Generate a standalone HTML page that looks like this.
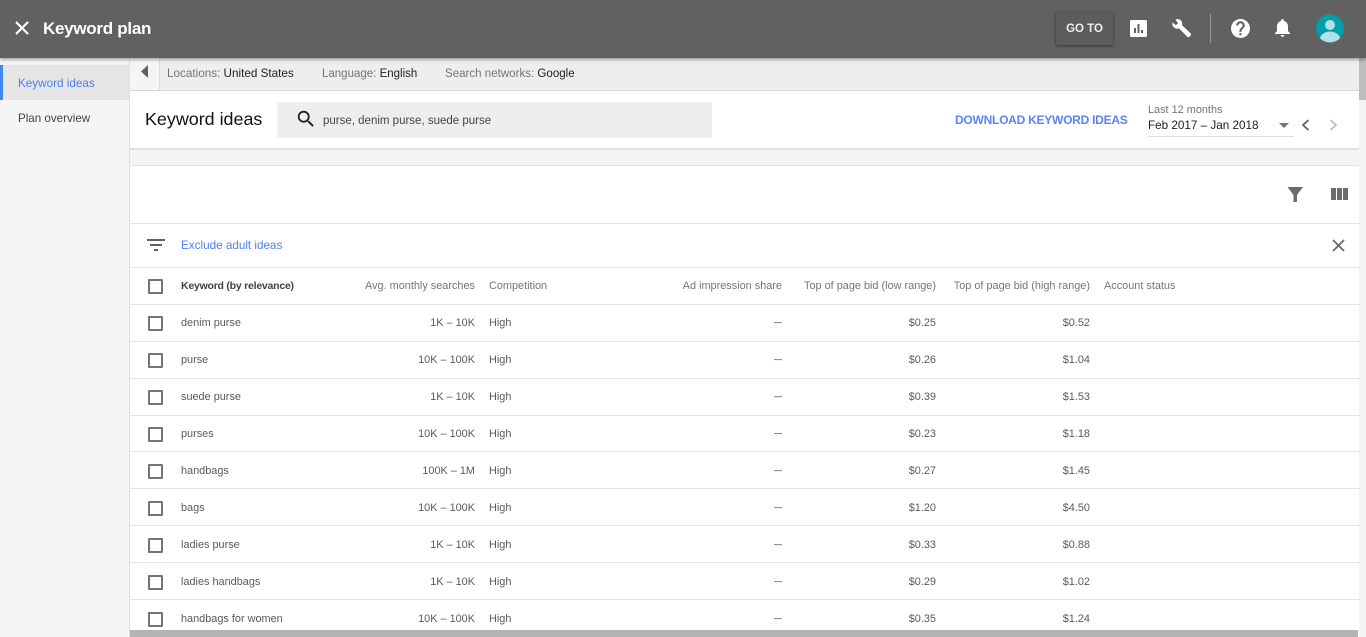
<!DOCTYPE html>
<html><head><meta charset="utf-8"><style>
html,body{margin:0;padding:0;width:1366px;height:637px;overflow:hidden;background:#f5f5f5;font-family:"Liberation Sans",sans-serif}
.a{position:absolute;white-space:nowrap}
.l{position:absolute;left:130px;width:1229px;height:1px;background:#e3e3e3}
.t{position:absolute;white-space:nowrap;font-size:10.9px;color:#5a5a5a;line-height:14px;margin-top:1px}
.r{text-align:right;width:200px}
.h{color:#757575}
.d{font-size:8px;color:#222}
.cb{position:absolute;left:148px;width:11px;height:11px;border:2px solid #757575;border-radius:1px}
svg{position:absolute;display:block}
</style></head><body>
<div class="a" style="left:130px;top:58px;width:1229px;height:579px;background:#fff"></div>
<div class="a" style="left:129px;top:58px;width:1px;height:579px;background:#e0e0e0"></div>
<!-- sidebar -->
<div class="a" style="left:0;top:65px;width:129px;height:35px;background:#e5e5e5"></div>
<div class="a" style="left:0;top:65px;width:3px;height:35px;background:#4285f4"></div>
<div class="a" style="left:18px;top:77px;font-size:11.7px;line-height:14px;color:#4d80f0">Keyword ideas</div>
<div class="a" style="left:18px;top:112px;font-size:11.6px;line-height:14px;color:#424242">Plan overview</div>
<!-- filter bar -->
<div class="a" style="left:130px;top:58px;width:1229px;height:32px;background:#eee;border-bottom:1px solid #d6d6d6"></div>
<div class="a" style="left:130px;top:58px;width:29px;height:32px;background:#f5f5f5;border-right:1px solid #ddd;border-bottom:1px solid #d6d6d6"></div>
<svg style="left:141px;top:65px" width="8" height="13"><path d="M7 0V13L0 6.5Z" fill="#616161"/></svg>
<div class="a" style="left:167px;top:67px;font-size:11.7px;line-height:14px;color:#757575">Locations: <span style="color:#212121">United States</span></div>
<div class="a" style="left:322px;top:67px;font-size:11.5px;line-height:14px;color:#757575">Language: <span style="color:#212121">English</span></div>
<div class="a" style="left:445px;top:67px;font-size:11.55px;line-height:14px;color:#757575">Search networks: <span style="color:#212121">Google</span></div>
<!-- title row -->
<div class="a" style="left:145px;top:108px;font-size:17.900px;line-height:22px;color:#111">Keyword ideas</div>
<div class="a" style="left:277px;top:102px;width:435px;height:36px;background:#eee"></div>
<svg style="left:295px;top:108px" width="22" height="22" viewBox="0 0 24 24"><path fill="#212121" d="M15.5 14h-.79l-.28-.27A6.47 6.47 0 0 0 16 9.5 6.5 6.5 0 1 0 9.5 16c1.61 0 3.09-.59 4.23-1.57l.27.28v.79l5 4.99L20.49 19l-4.99-5zm-6 0C7.01 14 5 11.99 5 9.5S7.01 5 9.5 5 14 7.01 14 9.5 11.99 14 9.5 14z"/></svg>
<div class="a" style="left:323px;top:114px;font-size:11.5px;line-height:14px;color:#444">purse, denim purse, suede purse</div>
<div class="a" style="left:955px;top:113px;font-size:12px;letter-spacing:-.25px;line-height:15px;font-weight:bold;color:#5a85ee">DOWNLOAD KEYWORD IDEAS</div>
<div class="a" style="left:1148px;top:104px;font-size:10.9px;line-height:13px;color:#757575">Last 12 months</div>
<div class="a" style="left:1148px;top:118px;font-size:11.7px;line-height:15px;color:#212121">Feb 2017 – Jan 2018</div>
<div class="a" style="left:1148px;top:136px;width:146px;height:1px;background:#ddd"></div>
<svg style="left:1279px;top:123px" width="10" height="5"><path d="M0 0H10L5 5Z" fill="#757575"/></svg>
<svg style="left:1301px;top:119px" width="9" height="12"><path d="M7.5 1L2 6l5.500 5" fill="none" stroke="#616161" stroke-width="1.800"/></svg>
<svg style="left:1329px;top:119px" width="9" height="12"><path d="M1.500 1L7 6l-5.500 5" fill="none" stroke="#bdbdbd" stroke-width="1.800"/></svg>
<!-- grey gap -->
<div class="a" style="left:130px;top:148px;width:1229px;height:17px;background:#f5f5f5;border-top:2px solid #e0e0e0;box-sizing:border-box"></div>
<div class="l" style="top:165px"></div>
<!-- toolbar -->
<svg style="left:1287px;top:186px" width="17" height="17"><path d="M0.500 1H16L10 9V16H6.500V9Z" fill="#6b6b6b"/></svg>
<svg style="left:1331px;top:188px" width="17" height="12"><path d="M0 0H5V12H0ZM6 0H11V12H6ZM12 0H17V12H12Z" fill="#6b6b6b"/></svg>
<div class="l" style="top:223px"></div>
<svg style="left:147px;top:239px" width="18" height="12"><path d="M0 0H18V2H0ZM3 5H15V7H3ZM7 10H11V12H7Z" fill="#616161"/></svg>
<div class="a" style="left:181px;top:239px;font-size:11.700px;line-height:14px;color:#4d80f0">Exclude adult ideas</div>
<svg style="left:1332px;top:239px" width="13" height="13"><path d="M1 1L12 12M12 1L1 12" stroke="#666" stroke-width="1.800" fill="none"/></svg>
<div class="l" style="top:267px"></div>
<!-- table head -->
<div class="cb" style="top:279px"></div>
<div class="t" style="left:181px;top:278px;font-size:10.5px;letter-spacing:-.23px;font-weight:bold;color:#424242">Keyword (by relevance)</div>
<div class="t r h" style="left:275px;top:278px">Avg. monthly searches</div>
<div class="t h" style="left:489px;top:278px">Competition</div>
<div class="t r h" style="left:582px;top:278px">Ad impression share</div>
<div class="t r h" style="left:736px;top:278px">Top of page bid (low range)</div>
<div class="t r h" style="left:890px;top:278px">Top of page bid (high range)</div>
<div class="t h" style="left:1104px;top:278px">Account status</div>
<div class="l" style="top:304px"></div>
<!-- rows -->
<div class="cb" style="top:316px"></div><div class="t" style="left:181px;top:315px">denim purse</div><div class="t r" style="left:275px;top:315px">1K – 10K</div><div class="t" style="left:489px;top:315px">High</div><div class="t r d" style="left:582px;top:315px">—</div><div class="t r" style="left:736px;top:315px">$0.25</div><div class="t r" style="left:890px;top:315px">$0.52</div><div class="l" style="top:341px"></div>
<div class="cb" style="top:353px"></div><div class="t" style="left:181px;top:352px">purse</div><div class="t r" style="left:275px;top:352px">10K – 100K</div><div class="t" style="left:489px;top:352px">High</div><div class="t r d" style="left:582px;top:352px">—</div><div class="t r" style="left:736px;top:352px">$0.26</div><div class="t r" style="left:890px;top:352px">$1.04</div><div class="l" style="top:378px"></div>
<div class="cb" style="top:390px"></div><div class="t" style="left:181px;top:389px">suede purse</div><div class="t r" style="left:275px;top:389px">1K – 10K</div><div class="t" style="left:489px;top:389px">High</div><div class="t r d" style="left:582px;top:389px">—</div><div class="t r" style="left:736px;top:389px">$0.39</div><div class="t r" style="left:890px;top:389px">$1.53</div><div class="l" style="top:415px"></div>
<div class="cb" style="top:427px"></div><div class="t" style="left:181px;top:426px">purses</div><div class="t r" style="left:275px;top:426px">10K – 100K</div><div class="t" style="left:489px;top:426px">High</div><div class="t r d" style="left:582px;top:426px">—</div><div class="t r" style="left:736px;top:426px">$0.23</div><div class="t r" style="left:890px;top:426px">$1.18</div><div class="l" style="top:451px"></div>
<div class="cb" style="top:464px"></div><div class="t" style="left:181px;top:463px">handbags</div><div class="t r" style="left:275px;top:463px">100K – 1M</div><div class="t" style="left:489px;top:463px">High</div><div class="t r d" style="left:582px;top:463px">—</div><div class="t r" style="left:736px;top:463px">$0.27</div><div class="t r" style="left:890px;top:463px">$1.45</div><div class="l" style="top:488px"></div>
<div class="cb" style="top:501px"></div><div class="t" style="left:181px;top:500px">bags</div><div class="t r" style="left:275px;top:500px">10K – 100K</div><div class="t" style="left:489px;top:500px">High</div><div class="t r d" style="left:582px;top:500px">—</div><div class="t r" style="left:736px;top:500px">$1.20</div><div class="t r" style="left:890px;top:500px">$4.50</div><div class="l" style="top:525px"></div>
<div class="cb" style="top:538px"></div><div class="t" style="left:181px;top:537px">ladies purse</div><div class="t r" style="left:275px;top:537px">1K – 10K</div><div class="t" style="left:489px;top:537px">High</div><div class="t r d" style="left:582px;top:537px">—</div><div class="t r" style="left:736px;top:537px">$0.33</div><div class="t r" style="left:890px;top:537px">$0.88</div><div class="l" style="top:562px"></div>
<div class="cb" style="top:575px"></div><div class="t" style="left:181px;top:574px">ladies handbags</div><div class="t r" style="left:275px;top:574px">1K – 10K</div><div class="t" style="left:489px;top:574px">High</div><div class="t r d" style="left:582px;top:574px">—</div><div class="t r" style="left:736px;top:574px">$0.29</div><div class="t r" style="left:890px;top:574px">$1.02</div><div class="l" style="top:599px"></div>
<div class="cb" style="top:612px"></div><div class="t" style="left:181px;top:611px">handbags for women</div><div class="t r" style="left:275px;top:611px">10K – 100K</div><div class="t" style="left:489px;top:611px">High</div><div class="t r d" style="left:582px;top:611px">—</div><div class="t r" style="left:736px;top:611px">$0.35</div><div class="t r" style="left:890px;top:611px">$1.24</div>
<!-- scrollbars -->
<div class="a" style="left:130px;top:630px;width:1228px;height:7px;background:#b4b4b4"></div>
<div class="a" style="left:1359px;top:58px;width:7px;height:579px;background:#f3f3f3"></div>
<div class="a" style="left:1359px;top:58px;width:7px;height:42px;background:#bdbdbd"></div>
<!-- header -->
<div class="a" style="left:0;top:0;width:1366px;height:58px;background:#616161;box-shadow:0 1px 4px rgba(0,0,0,.45)"></div>
<svg style="left:15px;top:21px" width="14" height="14"><path d="M1 1L13 13M13 1L1 13" stroke="#fff" stroke-width="2.200" fill="none"/></svg>
<div class="a" style="left:43px;top:17px;font-size:17px;letter-spacing:-.28px;line-height:23px;font-weight:bold;color:#fff">Keyword plan</div>
<div class="a" style="left:1056px;top:12px;width:57px;height:33px;background:#5c5c5c;border-radius:2px;box-shadow:0 1px 3px rgba(0,0,0,.5);text-align:center;font-size:11.500px;line-height:35px;font-weight:bold;color:#eee">GO TO</div>
<svg style="left:1130px;top:20px" width="17" height="17"><path fill-rule="evenodd" d="M1.500 0H15.500A1.500 1.500 0 0 1 17 1.500V15.500A1.500 1.500 0 0 1 15.500 17H1.500A1.500 1.500 0 0 1 0 15.500V1.500A1.500 1.500 0 0 1 1.500 0ZM4 8V13H6V8ZM7.500 4V13H9.500V4ZM11 10V13H13V10Z" fill="#fff"/></svg>
<svg style="left:1171px;top:18px" width="21" height="21" viewBox="0 0 21 21"><path fill="#fff" d="M1.500 4.500L4.800 7.300 7 5.200 4.500 1.600C6.800.6 9.200 1.200 10.400 3c.9 1.300 1 2.800.6 4.100l8.600 8.300c.6.600.6 1.500 0 2.100l-1.200 1.200c-.6.600-1.500.6-2.100 0L8 10.400C6.500 11 4.800 10.800 3.400 9.800 1.800 8.600 1 6.500 1.500 4.500Z"/></svg>
<div class="a" style="left:1210px;top:14px;width:1px;height:29px;background:#999"></div>
<svg style="left:1231px;top:19px" width="19" height="19" viewBox="0 0 24 24"><path fill="#fff" d="M12 0a12 12 0 1 0 0 24 12 12 0 0 0 0-24zm1.300 20.500h-2.700v-2.700h2.700v2.700zm2.800-9.300l-1.200 1.200c-1 1-1.600 1.800-1.600 3.800h-2.700v-.7c0-1.500.6-2.800 1.600-3.800l1.700-1.700c.5-.5.800-1.200.8-1.900 0-1.500-1.200-2.700-2.700-2.700S9.300 6.600 9.300 8.100H6.600a5.400 5.400 0 0 1 10.800 0c0 1.200-.5 2.300-1.300 3.100z"/></svg>
<svg style="left:1274px;top:19px" width="17" height="19" viewBox="0 0 17 19"><path fill="#fff" d="M8.500 0c.8 0 1.300.6 1.300 1.300v.6c2.600.6 4.200 2.900 4.200 5.600v4.600l2 2V15H1v-.9l2-2V7.500c0-2.700 1.600-5 4.200-5.600v-.6C7.200.6 7.700 0 8.500 0ZM6.700 16h3.600a1.800 1.800 0 0 1-3.600 0Z"/></svg>
<svg style="left:1316px;top:14px" width="28" height="29" viewBox="0 0 28 29"><defs><clipPath id="c"><circle cx="14" cy="14.500" r="14"/></clipPath></defs><circle cx="14" cy="14.500" r="14" fill="#00a0ad"/><g clip-path="url(#c)"><circle cx="14" cy="11" r="5" fill="#b2e2e6"/><ellipse cx="14" cy="25" rx="10" ry="7.500" fill="#b2e2e6"/></g></svg>
</body></html>
